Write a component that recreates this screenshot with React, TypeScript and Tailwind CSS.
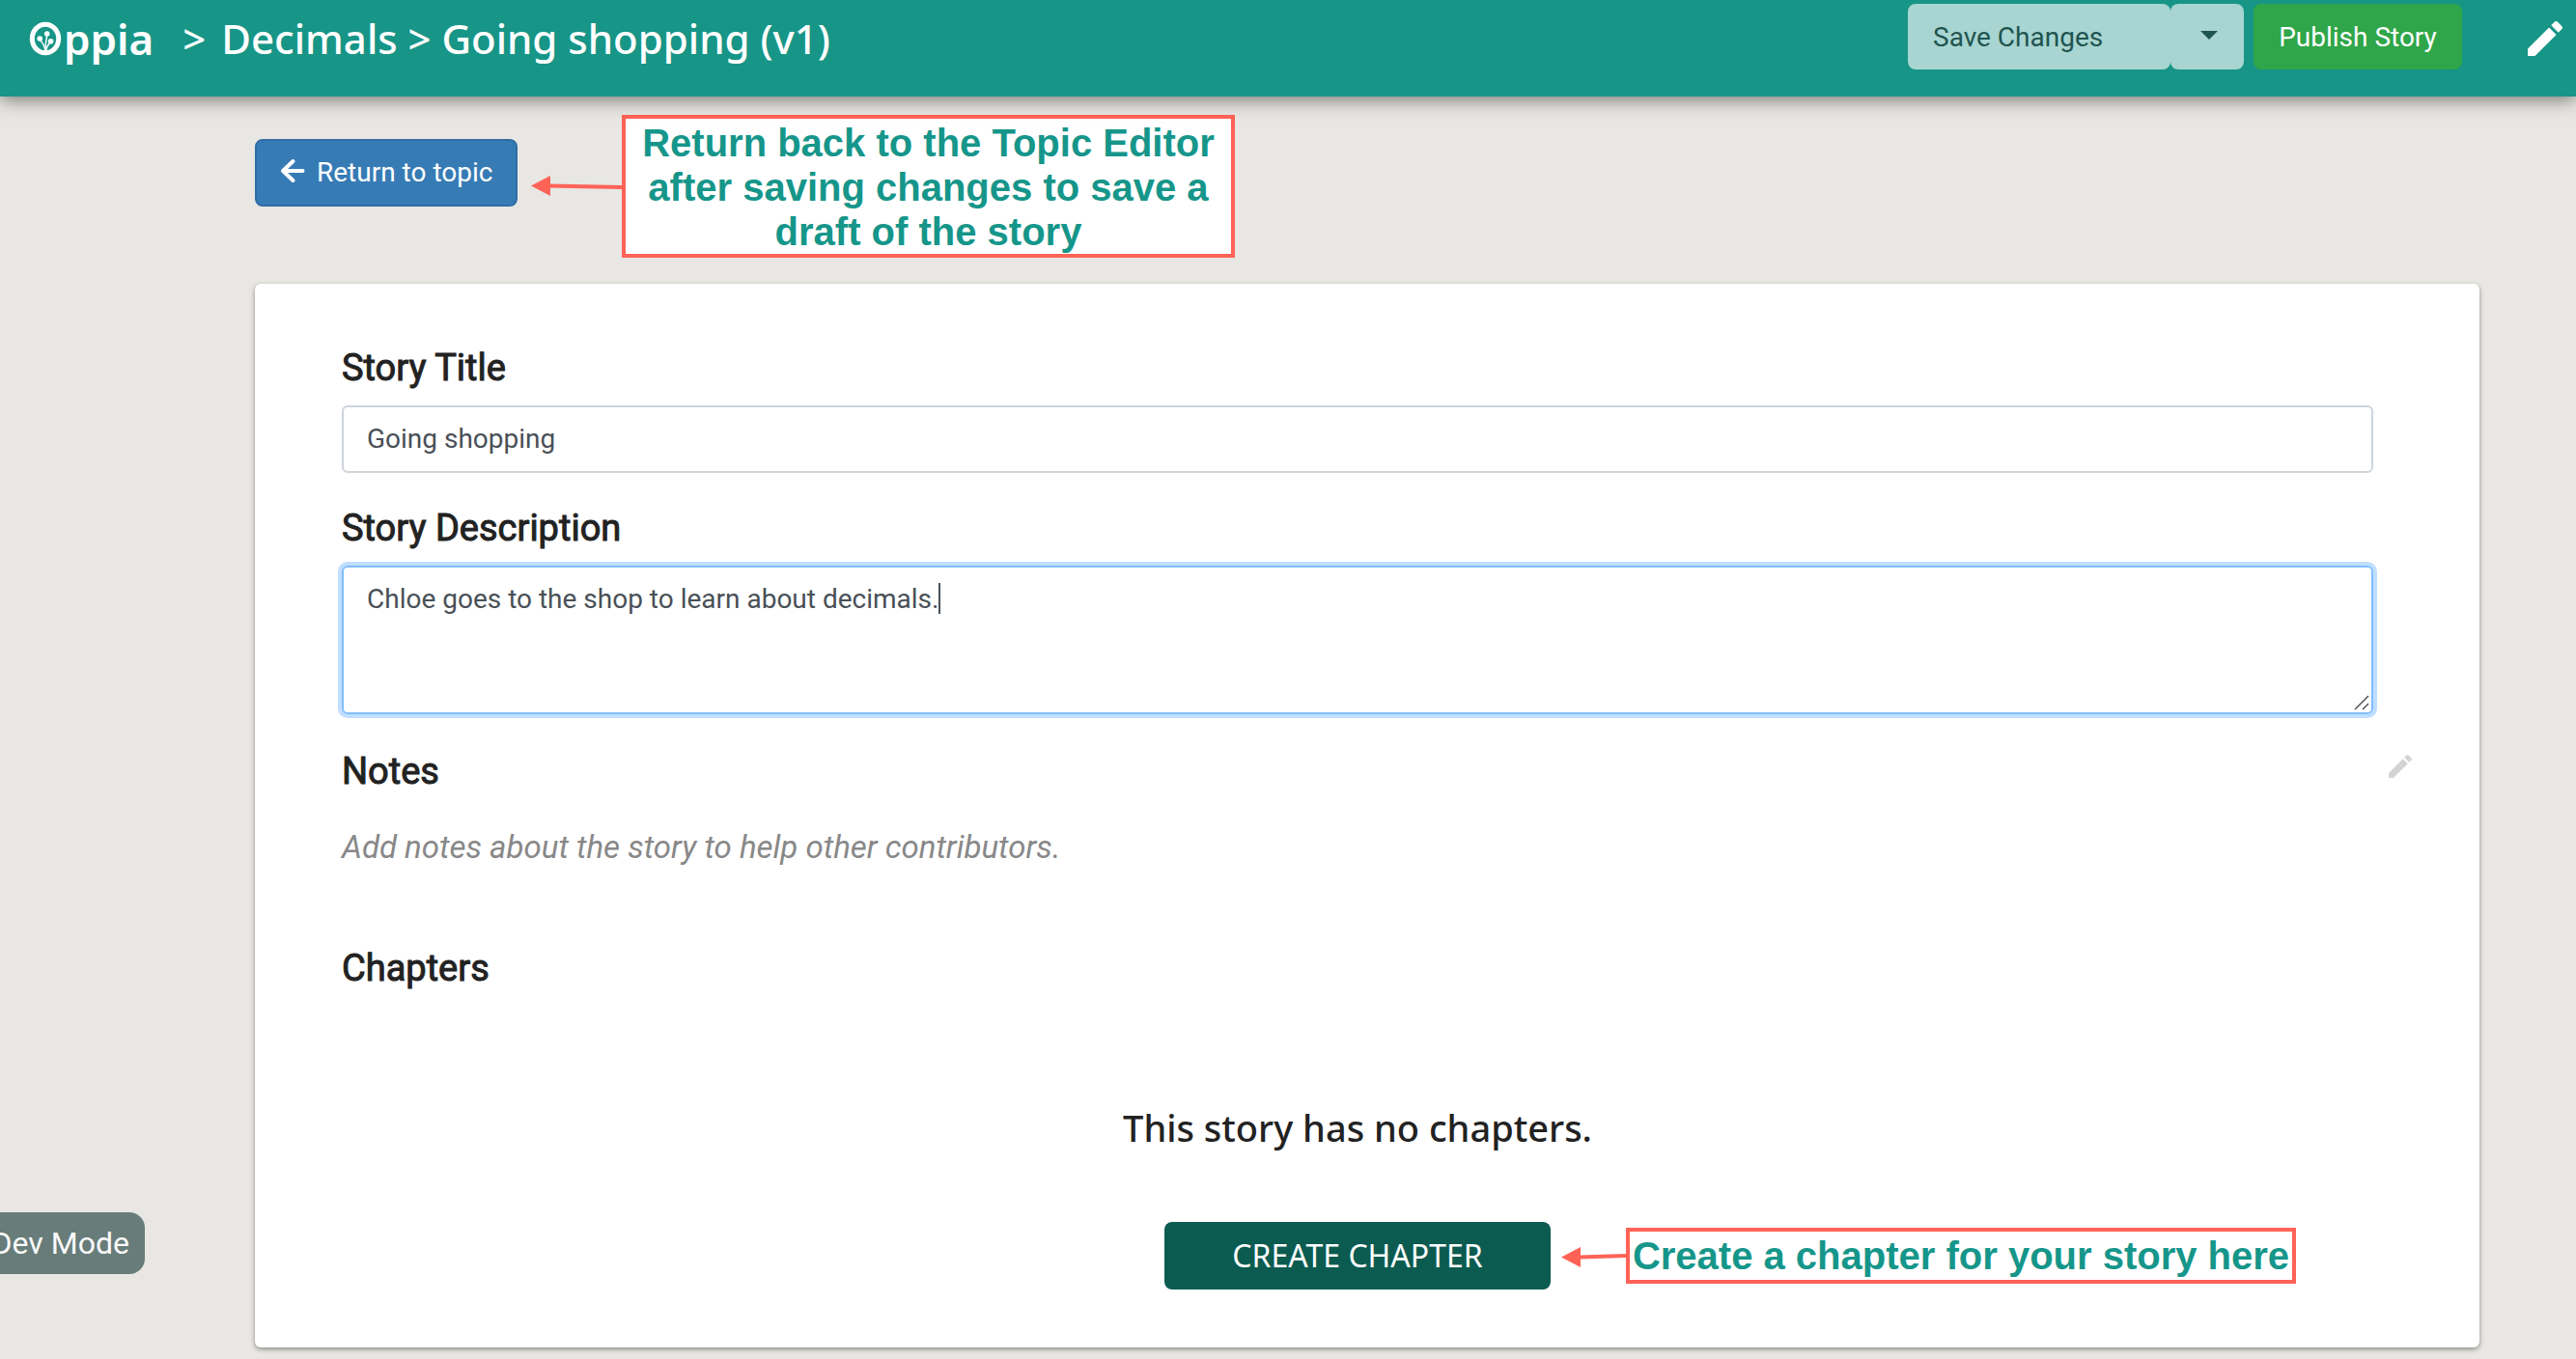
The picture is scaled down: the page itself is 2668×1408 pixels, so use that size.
import type { ReactNode } from "react";

const brandFont = "font-['Noto_Sans',sans-serif] font-medium";

function OppiaLogo() {
  return (
    <a href="#home" aria-label="Oppia" className="flex items-center text-white">
      <svg viewBox="0 0 34 36" className="h-9 w-[34px] shrink-0" fill="none" stroke="currentColor">
        <ellipse cx="17" cy="18" rx="13.7" ry="14.8" strokeWidth="5" />
        <g strokeWidth="1.4" strokeLinecap="round">
          <path d="M17 32C16.6 27 14.5 22.5 12 20" />
          <path d="M17 32C17 25 17.6 20 18.6 15" />
          <path d="M17.4 32C18 28 19.5 24.5 22 22" />
        </g>
        <g fill="currentColor" stroke="none">
          <circle cx="11.2" cy="18" r="2.8" />
          <circle cx="18.7" cy="13" r="2.8" />
          <circle cx="22.6" cy="20.8" r="2.8" />
        </g>
      </svg>
      <span className="pl-0.5 font-['Noto_Sans',sans-serif] text-[44px] leading-[56px] font-semibold">ppia</span>
    </a>
  );
}

function PencilIcon({ className }: { className: string }) {
  return (
    <svg viewBox="3 3 18 18" fill="currentColor" className={className} aria-hidden="true">
      <path d="M3 17.25V21h3.75L17.81 9.94l-3.75-3.75L3 17.25zM20.71 7.04a.996.996 0 0 0 0-1.41l-2.34-2.34a.996.996 0 0 0-1.41 0l-1.83 1.83 3.75 3.75 1.83-1.83z" />
    </svg>
  );
}

function BackArrowIcon() {
  return (
    <svg viewBox="0 0 26 26" className="mb-1 size-[26px]" fill="none" stroke="currentColor" strokeWidth="4" strokeLinecap="round" strokeLinejoin="round" aria-hidden="true">
      <path d="M13.5 3L3 13L13.5 23M4 13H23.5" />
    </svg>
  );
}

function Callout({ children, className }: { children: ReactNode; className: string }) {
  return (
    <p className={`border-4 border-[#ff6357] bg-white text-center font-['Liberation_Sans',Arial,sans-serif] text-[40px] font-bold text-[#16968a] ${className}`}>
      {children}
    </p>
  );
}

function SectionTitle({ children }: { children: ReactNode }) {
  return <span className="block text-[38px] leading-[46px] [-webkit-text-stroke:1px_#222]">{children}</span>;
}

export default function App() {
  return (
    <div className="flex min-h-screen flex-col overflow-x-hidden bg-[#e8e7e3] font-[Roboto,sans-serif] text-[#222]">
      <header className="relative z-10 flex h-[100px] items-start bg-[#179587] text-white shadow-[0_3px_18px_rgba(0,0,0,0.5)]">
        <nav className="flex h-[80px] items-center pl-[30px]">
          <OppiaLogo />
          <h1 className={`${brandFont} flex items-center gap-4 pl-[30px] text-[42px] leading-[56px] whitespace-pre`}>
            <span>&gt;</span>
            <span>Decimals &gt; Going shopping (v1)</span>
          </h1>
        </nav>
        <div className="ml-auto flex items-center pt-1 pr-[14px] text-[28px]">
          <button type="button" className="h-[68px] w-[272px] rounded-lg bg-[#a8d5d1] pt-0.5 pl-[26px] text-left text-[#1f5450]">
            Save Changes
          </button>
          <button type="button" aria-label="More save options" className="flex h-[68px] w-[76px] items-center justify-center rounded-lg bg-[#a8d5d1] pl-1 text-[#1f5450]">
            <svg viewBox="0 0 18 9" className="mb-1 h-[9px] w-[18px]" fill="currentColor" aria-hidden="true">
              <path d="M0 0H18L9 9Z" />
            </svg>
          </button>
          <button type="button" className="ml-2.5 h-[68px] w-[216px] rounded-lg bg-[#2fa649] pt-0.5 text-white">
            Publish Story
          </button>
          <button type="button" aria-label="Open editor" className="ml-[68px] pt-1">
            <PencilIcon className="size-9" />
          </button>
        </div>
      </header>

      <main className="flex flex-1 flex-col pr-[100px] pb-3 pl-[264px]">
        <div className="flex items-start pt-[19px]">
          <button type="button" className="mt-[25px] flex h-[70px] w-[272px] items-center rounded-lg border-2 border-[#2f6da4] bg-[#377bb5] pl-6 text-[28px] text-white">
            <BackArrowIcon />
            <span className="pl-3">Return to topic</span>
          </button>
          <svg viewBox="0 0 94 24" className="mt-[62px] ml-[14px] h-6 w-[94px] shrink-0" aria-hidden="true">
            <path d="M18 11.5L94 13" stroke="#ff6357" strokeWidth="4" />
            <path d="M0 11.5L20 1V22Z" fill="#ff6357" />
          </svg>
          <Callout className="w-[635px] px-3 pt-0.5 leading-[46px]">
            Return back to the Topic Editor after saving changes to save a draft of the story
          </Callout>
        </div>

        <section className="mt-[27px] flex flex-1 flex-col rounded-md bg-white pt-[64px] pr-[70px] pl-[90px] shadow-[0_2px_5px_rgba(0,0,0,0.4)]">
          <div className="pr-10">
            <label htmlFor="story-title">
              <SectionTitle>Story Title</SectionTitle>
            </label>
            <input
              id="story-title"
              defaultValue="Going shopping"
              className="mt-4 block h-[70px] w-full rounded-md border-2 border-[#ced4da] px-6 pb-0.5 text-[28px] text-[#495057]"
            />
            <label htmlFor="story-description" className="mt-[34px] block">
              <SectionTitle>Story Description</SectionTitle>
            </label>
            <div className="relative mt-4">
              <textarea
                id="story-description"
                defaultValue="Chloe goes to the shop to learn about decimals."
                className="block h-[154px] w-full resize-none rounded-md border-2 border-[#80bdff] px-6 py-[13px] text-[28px] leading-[40px] text-[#495057] shadow-[0_0_0_4px_#c0deff] outline-none"
              />
              <span className="absolute top-[18px] left-[618px] h-8 w-0.5 bg-[#495057]" />
              <svg viewBox="0 0 16 16" className="absolute right-1 bottom-1 size-4" stroke="#555" strokeWidth="1.5" aria-hidden="true">
                <path d="M1 15L15 1M9 15L15 9" />
              </svg>
            </div>
          </div>

          <div className="mt-[36px] flex items-start justify-between">
            <h2>
              <SectionTitle>Notes</SectionTitle>
            </h2>
            <button type="button" aria-label="Edit notes" className="mt-1.5 text-[#d3d3d3]">
              <PencilIcon className="size-6" />
            </button>
          </div>
          <p className="mt-[36px] text-[33px] leading-[40px] text-[#888] italic">
            Add notes about the story to help other contributors.
          </p>

          <h2 className="mt-[82px]">
            <SectionTitle>Chapters</SectionTitle>
          </h2>
          <div className="mt-[116px] flex flex-col items-center pr-10">
            <p className={`${brandFont} text-[38px] leading-[52px]`}>This story has no chapters.</p>
            <div className="relative mt-[72px]">
              <button type="button" className="h-[70px] w-[400px] rounded-lg bg-[#0b5b51] font-['Noto_Sans',sans-serif] text-[32px] text-white uppercase">
                Create Chapter
              </button>
              <div className="absolute top-1.5 left-full flex items-center pl-[11px]">
                <svg viewBox="0 0 67 24" className="h-6 w-[67px] shrink-0" aria-hidden="true">
                  <path d="M18 13.5L67 12" stroke="#ff6357" strokeWidth="4" />
                  <path d="M0 13.5L20 3V24Z" fill="#ff6357" />
                </svg>
                <Callout className="w-[694px] leading-[50px] whitespace-nowrap">Create a chapter for your story here</Callout>
              </div>
            </div>
          </div>
        </section>
      </main>

      <div className="fixed bottom-[88px] left-[-16px] flex h-16 w-[166px] items-center justify-end rounded-2xl bg-[#687c7a] pr-4 text-[32px] text-[#fafafa]">
        Dev Mode
      </div>
    </div>
  );
}
